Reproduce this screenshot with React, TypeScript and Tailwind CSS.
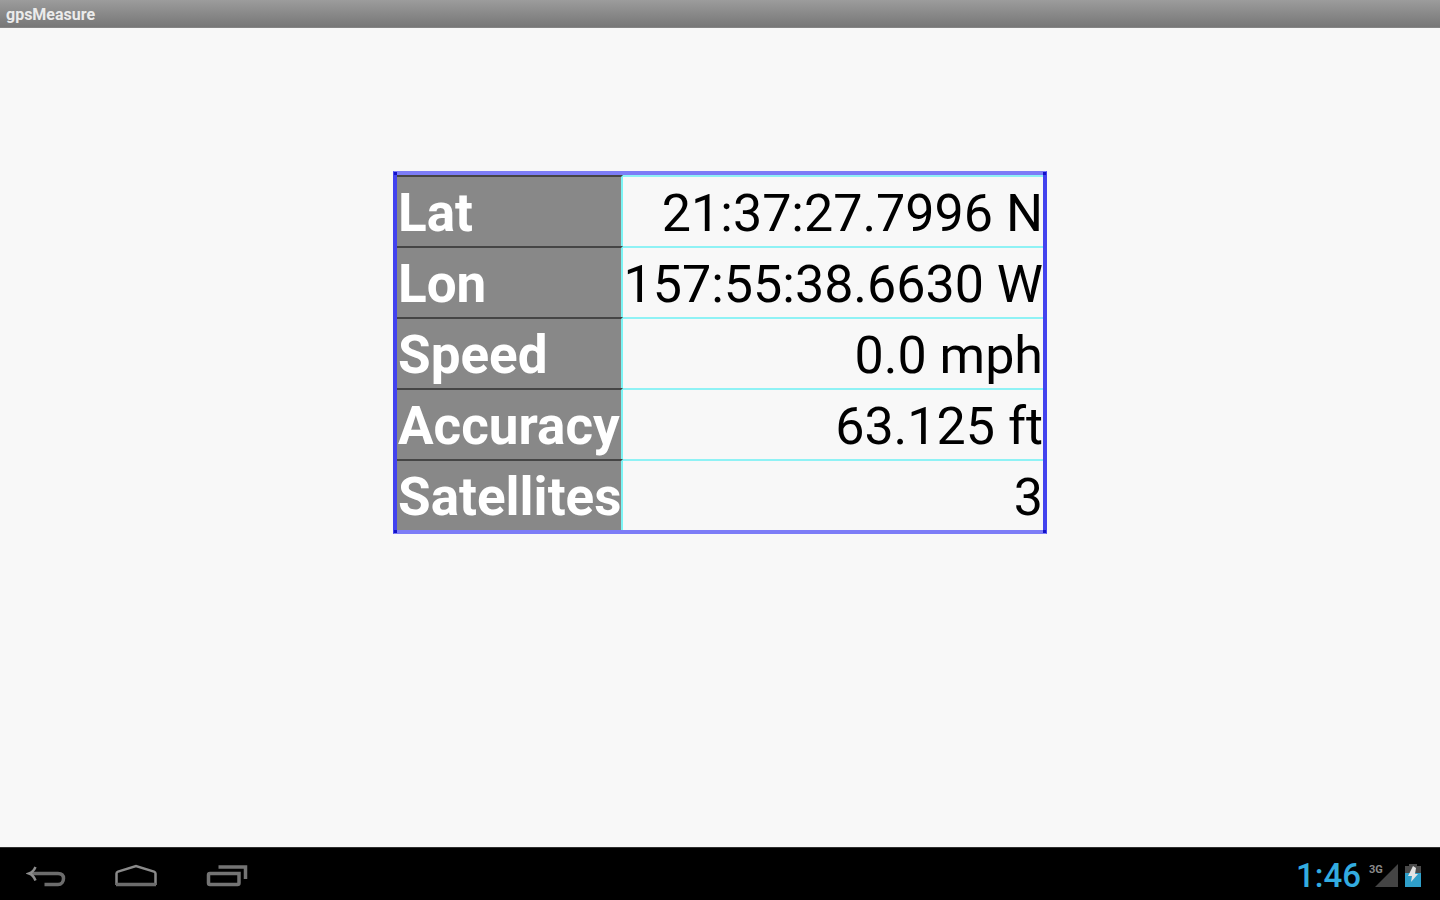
import React from 'react';

interface Reading {
  label: string;
  value: string;
}

const readings: Reading[] = [
  { label: 'Lat', value: '21:37:27.7996 N' },
  { label: 'Lon', value: '157:55:38.6630 W' },
  { label: 'Speed', value: '0.0 mph' },
  { label: 'Accuracy', value: '63.125 ft' },
  { label: 'Satellites', value: '3' },
];

function TitleBar() {
  return (
    <header className="h-7 px-[6px] pt-[3px] flex items-center bg-gradient-to-b from-[#9c9c9c] to-[#777777] border-b border-[#858585]">
      <h1 className="text-base leading-5 font-bold text-[#ebebeb]">gpsMeasure</h1>
    </header>
  );
}

function ReadingsTable() {
  return (
    <div className="relative w-[654px] border-4 border-x-[#4343ee] border-y-[#7d7df7]">
      <table className="w-full table-fixed border-separate border-spacing-0 leading-[65px]">
        <colgroup>
          <col className="w-[226px]" />
          <col />
        </colgroup>
        <tbody>
          {readings.map((reading) => (
            <tr key={reading.label}>
              <th
                scope="row"
                className="p-0 pt-1 pl-px text-left text-[53px] font-bold text-white whitespace-nowrap bg-[#888888] border-t-2 border-t-[#454545] border-r-2 border-r-[#7cf4f4]"
              >
                {reading.label}
              </th>
              <td className="p-0 pt-1 text-right text-[52px] text-black whitespace-nowrap border-t-2 border-[#8ff2f5]">
                {reading.value}
              </td>
            </tr>
          ))}
        </tbody>
      </table>
      {/* darker joints where the frame lines cross */}
      <span className="absolute -top-[3px] -left-[3px] size-[3px] bg-[#1212c8]" />
      <span className="absolute -top-[3px] -right-[3px] size-[3px] bg-[#1212c8]" />
      <span className="absolute -bottom-[3px] -left-[3px] size-[3px] bg-[#1212c8]" />
      <span className="absolute -bottom-[3px] -right-[3px] size-[3px] bg-[#1212c8]" />
    </div>
  );
}

function BackIcon() {
  return (
    <svg width="40" height="28" viewBox="0 0 40 28" fill="none">
      <path d="M6 11.5H32C35.5 11.5 37.5 13.5 37.5 16.5S35.5 22.5 32 22.5H18.5" stroke="#6c6c6c" strokeWidth="3.5" />
      <path d="M9.5 5C8 8.5 6 10.5 3 11.5C6 12.5 8 14.5 9.5 18.5" stroke="#8c8c8c" strokeWidth="2.5" />
    </svg>
  );
}

function HomeIcon() {
  return (
    <svg width="44" height="28" viewBox="0 0 44 28" fill="none">
      <path d="M2.5 23V11.5C2.5 10.5 3 10 4 9.6L22 4L40 9.6C41 10 41.5 10.5 41.5 11.5V23" stroke="#8a8a8a" strokeWidth="2.5" />
      <path d="M2 22.5H42" stroke="#6c6c6c" strokeWidth="3.5" />
    </svg>
  );
}

function RecentIcon() {
  return (
    <svg width="44" height="28" viewBox="0 0 44 28" fill="none" stroke="#747474">
      <path d="M2.5 13V21C2.5 22 3 22.5 4 22.5H31.5C32.5 22.5 33 22 33 21V11.5H4C3 11.5 2.5 12 2.5 13Z" strokeWidth="3.5" />
      <path d="M12.5 5H39.5V17" strokeWidth="3.5" />
    </svg>
  );
}

function SystemBar() {
  return (
    <footer className="h-[53px] pl-[26px] pr-[18px] pt-[3px] flex items-center justify-between bg-black border-t border-[#303030]">
      <nav className="flex items-center gap-12">
        <button type="button" aria-label="Back">
          <BackIcon />
        </button>
        <button type="button" aria-label="Home">
          <HomeIcon />
        </button>
        <button type="button" aria-label="Recent apps">
          <RecentIcon />
        </button>
      </nav>
      <div className="flex items-center gap-1">
        <time className="text-[33px] leading-10 font-medium text-[#33ace0]">1:46</time>
        <svg width="36" height="28" viewBox="0 0 36 28">
          <path d="M33 2V25H10Z" fill="#444444" />
          <text x="4" y="11" fontSize="11" fontWeight="700" fill="#8a8a8a">3G</text>
        </svg>
        <svg width="17" height="28" viewBox="0 0 17 28">
          <path d="M4 2H12V4H16V11H0V4H4Z" fill="#4a4a4a" />
          <path d="M0 11H16V25H0Z" fill="#2f9fca" />
          <path d="M8 4L3 14H7L6 20L13 12H10L11 6Z" fill="#e4e4e4" />
        </svg>
      </div>
    </footer>
  );
}

function App() {
  return (
    <div className="min-h-screen flex flex-col bg-[#f8f8f8] font-['Roboto',sans-serif]">
      <TitleBar />
      <main className="flex-1 flex justify-center items-start pt-[143px]">
        <ReadingsTable />
      </main>
      <SystemBar />
    </div>
  );
}

export default App;
